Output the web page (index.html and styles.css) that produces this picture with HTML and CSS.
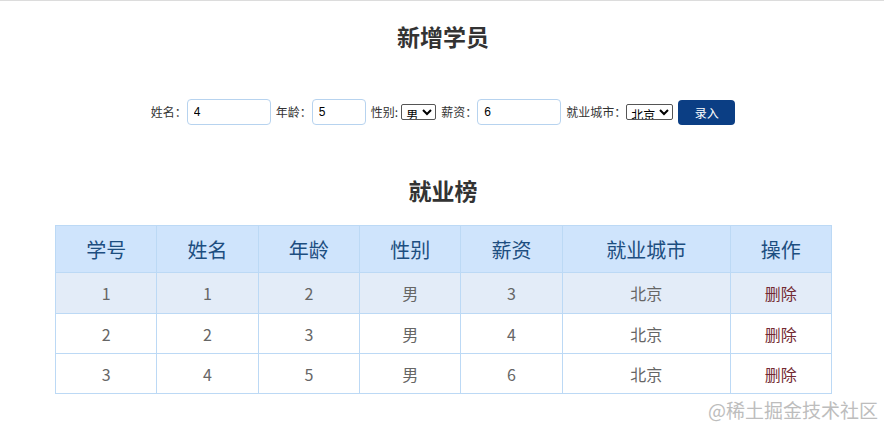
FILE: index.html
```html
<!DOCTYPE html>
<html lang="zh-CN">
<head>
<meta charset="utf-8">
<title>就业榜</title>
<link rel="stylesheet" href="styles.css">
</head>
<body>
<div class="page">
  <h3 class="title">新增学员</h3>
  <form class="form-row">
    <span class="lbl">姓名：</span><input class="ipt name" value="4">
    <span class="lbl">年龄：</span><input class="ipt age" value="5">
    <span class="lbl lbl-sel">性别:</span><select class="sel"><option>男</option><option>女</option></select>
    <span class="lbl">薪资：</span><input class="ipt salary" value="6">
    <span class="lbl">就业城市：</span><select class="sel"><option>北京</option><option>上海</option></select>
    <button type="button" class="btn">录入</button>
  </form>
  <h3 class="title title2">就业榜</h3>
  <table class="tbl">
    <thead>
      <tr><th>学号</th><th>姓名</th><th>年龄</th><th>性别</th><th>薪资</th><th class="wide">就业城市</th><th>操作</th></tr>
    </thead>
    <tbody>
      <tr class="hl"><td>1</td><td>1</td><td>2</td><td>男</td><td>3</td><td>北京</td><td><a class="del">删除</a></td></tr>
      <tr><td>2</td><td>2</td><td>3</td><td>男</td><td>4</td><td>北京</td><td><a class="del">删除</a></td></tr>
      <tr><td>3</td><td>4</td><td>5</td><td>男</td><td>6</td><td>北京</td><td><a class="del">删除</a></td></tr>
    </tbody>
  </table>
</div>
<div class="watermark">@稀土掘金技术社区</div>
</body>
</html>
```
FILE: styles.css
```css
html, body {
  margin: 0;
  padding: 0;
  background: #fff;
}
body {
  border-top: 1px solid #dcdcdc;
  font-family: "Noto Sans CJK SC", "Noto Sans", sans-serif;
  color: #333;
  height: 424px;
  overflow: hidden;
  position: relative;
}
.page {
  display: flex;
  flex-direction: column;
  align-items: center;
}
.title {
  margin: 20px 0 0 2px;
  font-size: 23px;
  line-height: 30px;
  font-weight: bold;
  color: #333;
}
.title2 {
  margin-top: 50px;
}
.form-row {
  margin: 48px 0 0 2px;
  display: flex;
  align-items: center;
  height: 26px;
  font-size: 12px;
  color: #333;
}
.lbl {
  margin: 0 0 0 5px;
  line-height: 16px;
}
.lbl-sel {
  margin-right: 3px;
}
.form-row .lbl:first-child {
  margin-left: 0;
}
.ipt {
  box-sizing: border-box;
  height: 26px;
  border: 1px solid #b7d3ef;
  border-radius: 4px;
  padding: 0 6px;
  font-family: "Liberation Sans", Arial, sans-serif;
  font-size: 12px;
  color: #000;
  outline: none;
}
.name, .salary { width: 84px; }
.age { width: 54px; }
.sel {
  box-sizing: border-box;
  height: 16px;
  font-size: 12px;
  padding: 0;
  margin: 0;
  border: 1px solid #555;
  border-radius: 2px;
  background: #fff;
  color: #000;
  font-family: "Noto Sans CJK SC", sans-serif;
  line-height: 14px;
}
.btn {
  box-sizing: border-box;
  margin-left: 5px;
  width: 57px;
  height: 25px;
  border: none;
  border-radius: 4px;
  background: #0b3e84;
  color: #fff;
  font-size: 12px;
  font-family: "Noto Sans CJK SC", sans-serif;
  padding: 0;
}
.tbl {
  margin: 20px 0 0 3px;
  width: 777px;
  border-collapse: collapse;
  table-layout: fixed;
  border: 1px solid #bcd9f5;
}
.tbl th, .tbl td {
  border: 1px solid #bcd9f5;
  text-align: center;
  padding: 0;
}
.tbl th {
  height: 46px;
  background: #cfe4fc;
  color: #1d4e80;
  font-size: 20px;
  font-weight: normal;
}
.tbl th.wide { width: 167px; }
.tbl td {
  height: 39px;
  font-size: 16px;
  color: #666;
}
.tbl tr.hl td {
  background: #e3ecf8;
  height: 40px;
}
.del {
  color: #732a33;
  cursor: pointer;
}
.watermark {
  position: absolute;
  right: 6px;
  top: 395px;
  font-size: 19px;
  color: #bdbdbd;
}
```
